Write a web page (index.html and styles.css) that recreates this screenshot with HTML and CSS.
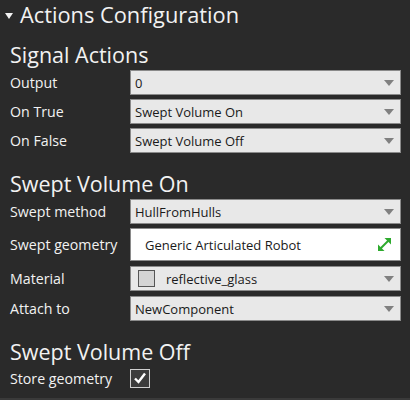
FILE: index.html
```html
<!DOCTYPE html>
<html>
<head>
<meta charset="utf-8">
<link rel="stylesheet" href="styles.css">
</head>
<body>
<div class="panel">
  <div class="header">
    <span class="caret"></span>
    <span class="header-title">Actions Configuration</span>
  </div>

  <div class="section first">
    <div class="section-title">Signal Actions</div>
    <div class="row">
      <div class="label">Output</div>
      <div class="combo"><span>0</span><span class="arrow"></span></div>
    </div>
    <div class="row">
      <div class="label">On True</div>
      <div class="combo"><span>Swept Volume On</span><span class="arrow"></span></div>
    </div>
    <div class="row">
      <div class="label">On False</div>
      <div class="combo"><span>Swept Volume Off</span><span class="arrow"></span></div>
    </div>
  </div>

  <div class="section second">
    <div class="section-title">Swept Volume On</div>
    <div class="row">
      <div class="label">Swept method</div>
      <div class="combo"><span>HullFromHulls</span><span class="arrow"></span></div>
    </div>
    <div class="row tall">
      <div class="label">Swept geometry</div>
      <div class="picker">
        <span>Generic Articulated Robot</span>
        <svg class="expand" width="15" height="15" viewBox="0 0 15 15">
          <path d="M2.5 12.5 L12.5 2.5" stroke="#2eaa2e" stroke-width="2" fill="none"/>
          <path d="M7.5 1 H14 V7.5 Z" fill="#2eaa2e"/>
          <path d="M1 7.5 V14 H7.5 Z" fill="#2eaa2e"/>
        </svg>
      </div>
    </div>
    <div class="row swatch-row">
      <div class="label">Material</div>
      <div class="combo"><span class="swatch"></span><span class="mat">reflective_glass</span><span class="arrow"></span></div>
    </div>
    <div class="row">
      <div class="label">Attach to</div>
      <div class="combo"><span>NewComponent</span><span class="arrow"></span></div>
    </div>
  </div>

  <div class="section last">
    <div class="section-title">Swept Volume Off</div>
    <div class="row check-row">
      <div class="label">Store geometry</div>
      <div class="checkbox">
        <svg width="14" height="14" viewBox="0 0 14 14">
          <path d="M2 7.5 L5.5 11 L12 2.5" stroke="#ffffff" stroke-width="2.4" fill="none" stroke-linejoin="miter"/>
        </svg>
      </div>
    </div>
  </div>
</div>
</body>
</html>
```

FILE: styles.css
```css
html, body {
  margin: 0;
  padding: 0;
  background: #2a2a2a;
}
body {
  width: 410px;
  height: 400px;
  overflow: hidden;
  font-family: "Open Sans", "Noto Sans", sans-serif;
  color: #f2f2f2;
}
.panel {
  width: 410px;
  height: 400px;
  box-sizing: border-box;
  border-bottom: 2px solid #3a3a3a;
  display: flex;
  flex-direction: column;
}
.header {
  height: 30px;
  display: flex;
  align-items: center;
  padding-left: 5px;
}
.caret {
  width: 0;
  height: 0;
  border-left: 4.5px solid transparent;
  border-right: 4.5px solid transparent;
  border-top: 6px solid #f2f2f2;
  margin-right: 7px;
  margin-top: 1px;
}
.header-title {
  font-size: 21.8px;
  line-height: 26px;
}
.section {
  padding: 0 9px 0 10px;
  margin-top: 11px;
}
.section.second {
  margin-top: 13px;
}
.section.last {
  margin-top: 13px;
}
.section-title {
  font-size: 21.5px;
  line-height: 28px;
  margin-bottom: 1px;
}
.row {
  display: flex;
  align-items: center;
  height: 25px;
  margin-bottom: 4px;
}
.row.tall {
  height: 33px;
  margin-bottom: 5px;
}
.row.swatch-row {
  margin-bottom: 5px;
}
.label {
  width: 120px;
  flex: none;
  font-size: 14.2px;
}
.combo {
  flex: 1;
  height: 25px;
  box-sizing: border-box;
  background: #e8e8e8;
  border: 1px solid #8a8a8a;
  display: flex;
  align-items: center;
  padding: 0 6px 0 4px;
  color: #1a1a1a;
  font-size: 13px;
}
.combo > span:first-child {
  flex: 1;
}
.arrow {
  flex: none;
  width: 0;
  height: 0;
  border-left: 5px solid transparent;
  border-right: 5px solid transparent;
  border-top: 6px solid #808080;
}
.swatch {
  flex: none !important;
  width: 17px;
  height: 17px;
  box-sizing: border-box;
  background: #d4d4d4;
  border: 1px solid #555;
  margin: 0 11px 0 3px;
}
.mat {
  flex: 1;
}
.picker {
  flex: 1;
  height: 33px;
  box-sizing: border-box;
  background: #ffffff;
  border: 1px solid #8a8a8a;
  display: flex;
  align-items: center;
  padding: 0 8px 0 14px;
  color: #1a1a1a;
  font-size: 13px;
}
.picker span {
  flex: 1;
}
.expand {
  flex: none;
}
.check-row {
  height: 22px;
}
.checkbox {
  width: 20px;
  height: 19px;
  box-sizing: border-box;
  background: #3c3c3c;
  border: 1px solid #d0d0d0;
  display: flex;
  align-items: center;
  justify-content: center;
}
```
